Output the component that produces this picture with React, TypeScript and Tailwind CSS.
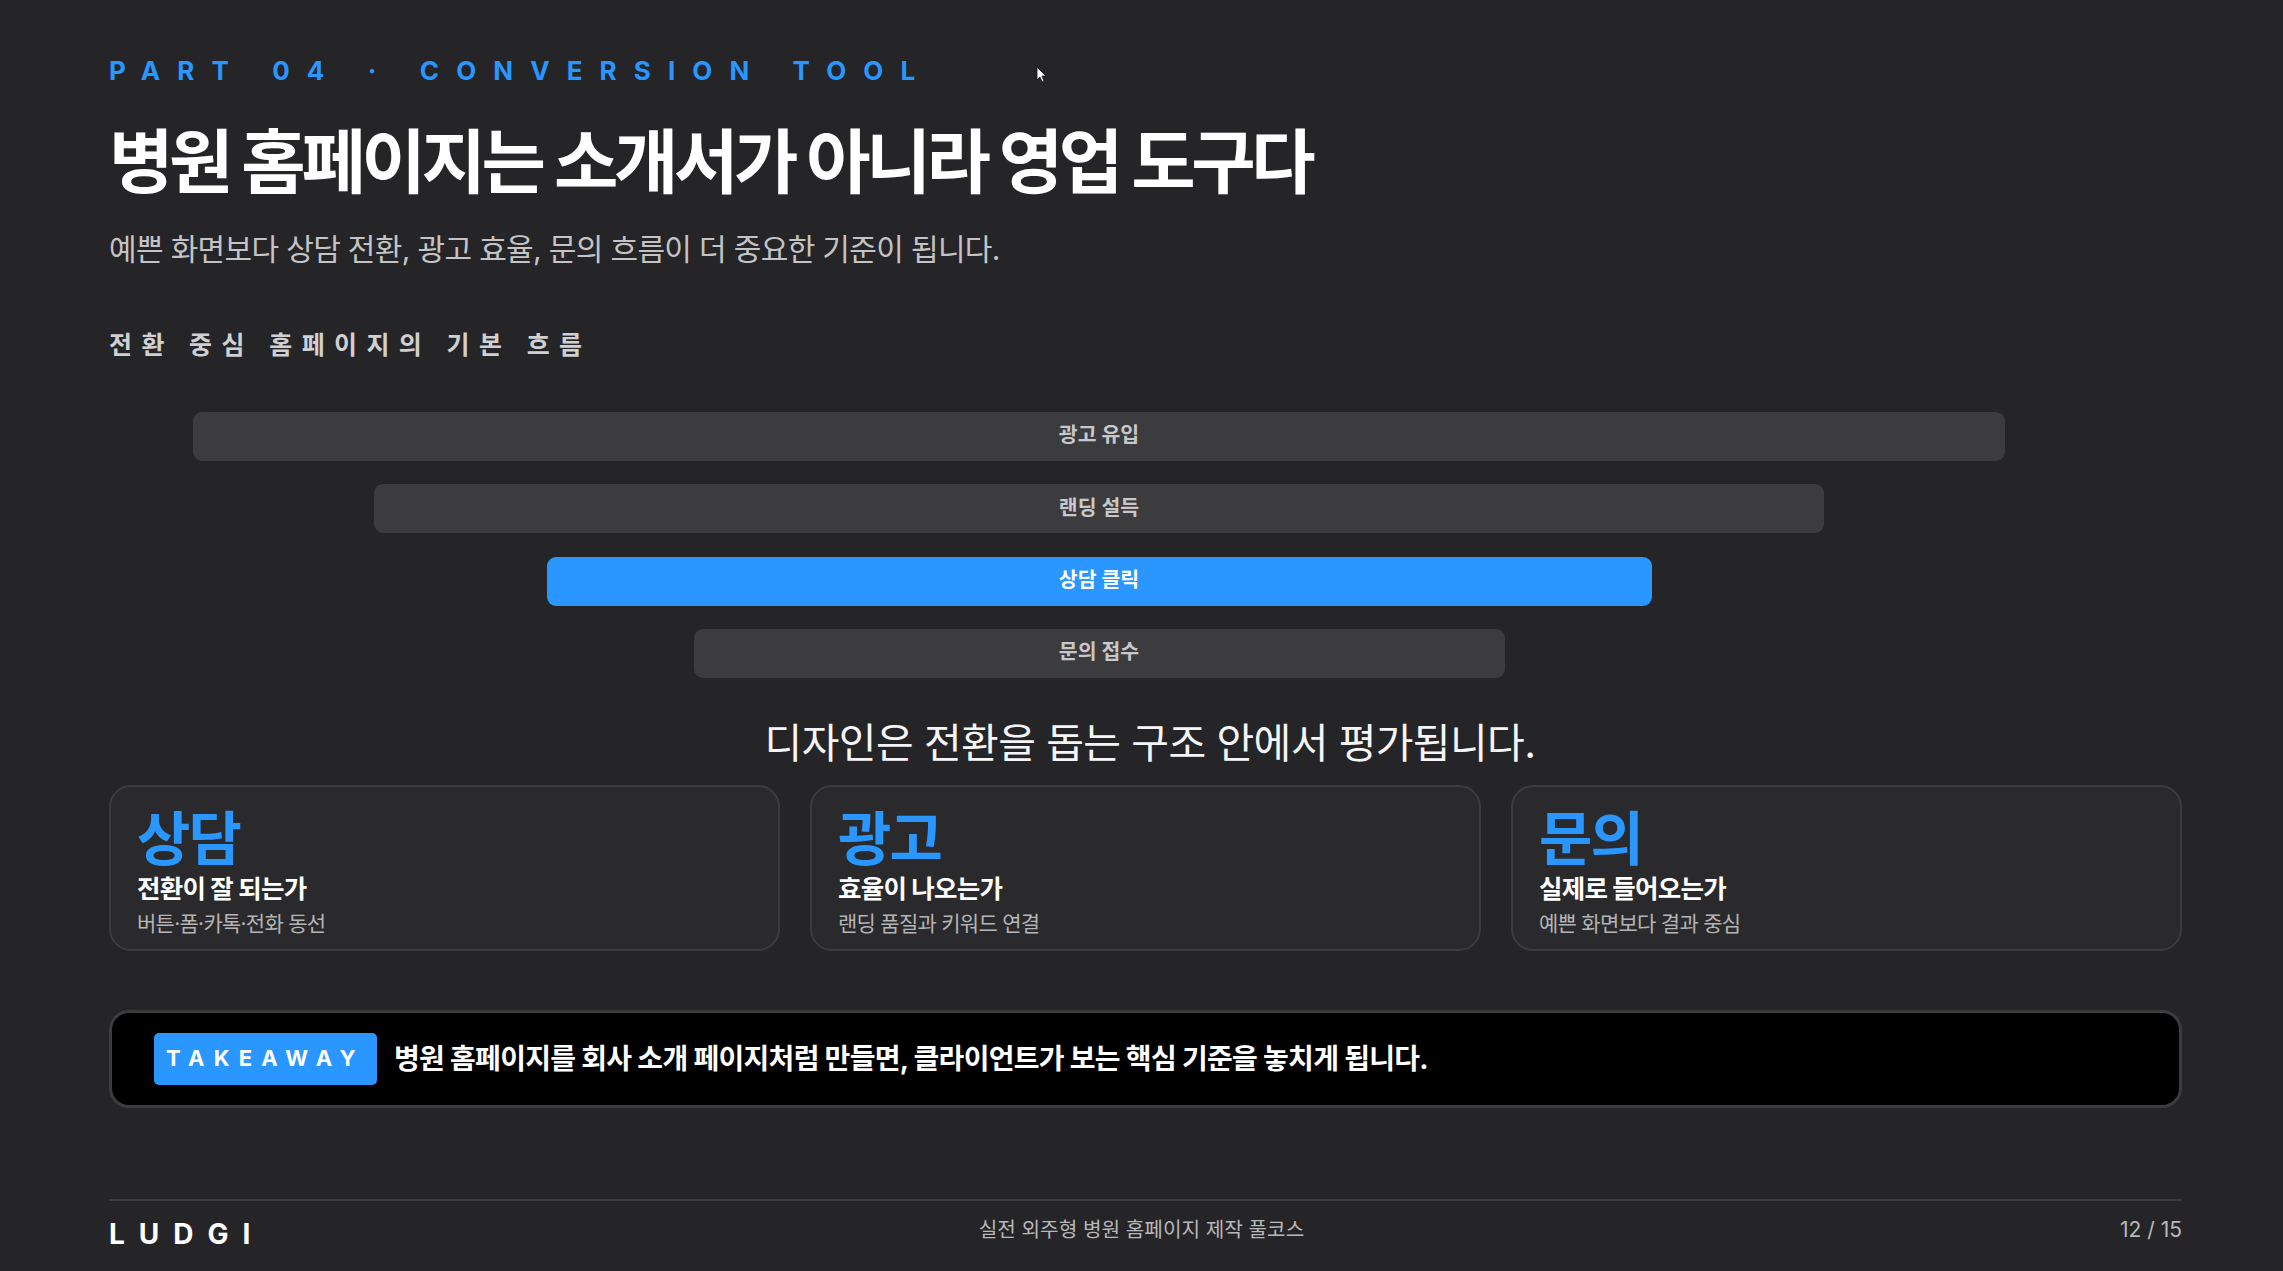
const FONT = "font-['Inter','Noto_Sans_CJK_KR',sans-serif]"

const steps = [
  { label: "광고 유입", width: "w-[1812px]", active: false },
  { label: "랜딩 설득", width: "w-[1450px]", active: false },
  { label: "상담 클릭", width: "w-[1105px]", active: true },
  { label: "문의 접수", width: "w-[811px]", active: false },
]

const cards = [
  { big: "상담", title: "전환이 잘 되는가", desc: "버튼·폼·카톡·전화 동선" },
  { big: "광고", title: "효율이 나오는가", desc: "랜딩 품질과 키워드 연결" },
  { big: "문의", title: "실제로 들어오는가", desc: "예쁜 화면보다 결과 중심" },
]

function Cursor() {
  return (
    <svg className="absolute left-[1036px] top-[66px]" width="12" height="18" viewBox="0 0 12 18">
      <path d="M1 1 L1 14 L4 11 L6 16 L8 15 L6 10 L10 10 Z" fill="#fff" stroke="#111" strokeWidth="0.8" />
    </svg>
  )
}

export default function App() {
  return (
    <div className={`relative h-[1271px] w-[2283px] overflow-hidden bg-[#252527] pl-[109px] pr-[101px] pt-[53px] ${FONT}`}>
      <Cursor />
      <p className="h-[36px] text-[26px] font-bold leading-[36px] tracking-[17.1px] [word-spacing:3px] text-[#2997ff]">PART 04 · CONVERSION TOOL</p>
      <h1 className="mt-[29px] h-[90px] text-[70px] font-bold leading-[90px] tracking-[-0.062em] text-white">병원 홈페이지는 소개서가 아니라 영업 도구다</h1>
      <p className="mt-[19px] h-[44px] text-[30px] leading-[44px] tracking-[-0.022em] text-[#c4c4c6]">예쁜 화면보다 상담 전환, 광고 효율, 문의 흐름이 더 중요한 기준이 됩니다.</p>
      <p className="mt-[56px] h-[36px] text-[25px] font-bold leading-[36px] tracking-[9.4px] text-[#d0d0d2]">전환 중심 홈페이지의 기본 흐름</p>

      <div className="mt-[49px] flex w-[1980px] flex-col items-center gap-[23.4px]">
        {steps.map((step) => (
          <div
            key={step.label}
            className={`flex h-[49px] items-center justify-center rounded-[9px] pb-[2px] text-[20.5px] font-bold ${step.width} ${
              step.active ? "bg-[#2997ff] text-white" : "bg-[#3c3c3e] text-[#c8c8ca]"
            }`}
          >
            {step.label}
          </div>
        ))}
      </div>

      <p className="mt-[35px] h-[60px] pl-[9px] text-center text-[41px] leading-[60px] tracking-[-0.015em] text-[#f5f5f7]">디자인은 전환을 돕는 구조 안에서 평가됩니다.</p>

      <div className="mt-[12px] grid h-[166px] grid-cols-3 gap-[30px]">
        {cards.map((card) => (
          <div key={card.big} className="rounded-[22px] border-2 border-[#3c3c3e] bg-[#2a2a2c] pl-[26px] pt-[19px]">
            <p className="h-[66px] text-[58px] font-bold leading-[66px] tracking-[-0.03em] text-[#2997ff]">{card.big}</p>
            <p className="h-[34px] text-[25.5px] font-bold leading-[34px] tracking-[-0.03em] text-white">{card.title}</p>
            <p className="mt-[3px] h-[30px] text-[21px] leading-[30px] tracking-[-0.035em] text-[#b4b4b6]">{card.desc}</p>
          </div>
        ))}
      </div>

      <div className="mt-[59px] flex h-[98px] items-center rounded-[20px] border-[3px] border-[#3c3c3e] bg-black pl-[42px]">
        <span className="flex h-[52px] w-[223px] items-center justify-center rounded-[5px] bg-[#2997ff] pb-[2px] text-[22px] font-bold tracking-[9.2px] text-white">TAKEAWAY</span>
        <span className="ml-[17px] text-[28px] font-bold tracking-[-0.025em] text-white">병원 홈페이지를 회사 소개 페이지처럼 만들면, 클라이언트가 보는 핵심 기준을 놓치게 됩니다.</span>
      </div>

      <div className="mt-[91px] grid grid-cols-3 border-t-2 border-[#3c3c3e] pt-[13px]">
        <span className="text-[28px] font-bold leading-[40px] tracking-[0.5em] text-white">LUDGI</span>
        <span className="pr-[8px] text-center text-[20.2px] leading-[32px] text-[#b8b8ba]">실전 외주형 병원 홈페이지 제작 풀코스</span>
        <span className="text-right text-[21px] leading-[32px] text-[#b8b8ba]">12 / 15</span>
      </div>
    </div>
  )
}
